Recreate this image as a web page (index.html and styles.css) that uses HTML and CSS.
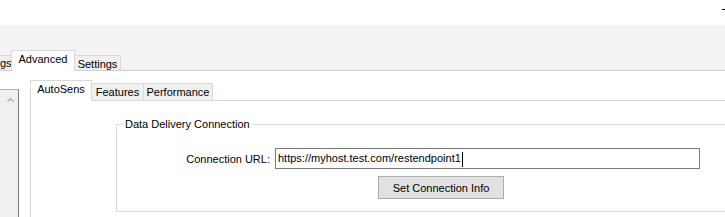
FILE: index.html
```html
<!DOCTYPE html>
<html lang="en">
<head>
    <meta charset="UTF-8">
    <title>Advanced - AutoSens</title>
    <link rel="stylesheet" href="styles.css">
</head>
<body>
    <div class="window">
        <div class="titlebar">
            <span class="min-btn"></span>
        </div>

        <div class="tabstrip">
            <div class="tab tab-cut">gs</div>
            <div class="tab active">Advanced</div>
            <div class="tab tab-settings">Settings</div>
        </div>

        <div class="main">
            <div class="sidebar">
                <svg class="chevron" width="7" height="5" viewBox="0 0 7 5">
                    <path d="M0.5 4.5 L3.5 1.5 L6.5 4.5" fill="none" stroke="#a6a6a6" stroke-width="1.2"/>
                </svg>
            </div>

            <div class="subtabs">
                <div class="subtab-strip">
                    <div class="subtab active">AutoSens</div>
                    <div class="subtab tab-features">Features</div>
                    <div class="subtab tab-perf">Performance</div>
                </div>

                <div class="page">
                    <fieldset class="group">
                        <legend>Data Delivery Connection</legend>
                        <div class="form">
                            <label class="form-label">Connection URL:</label>
                            <div class="textbox">
                                <span>https://myhost.test.com/restendpoint1</span><span class="caret"></span>
                            </div>
                            <button class="btn">Set Connection Info</button>
                        </div>
                    </fieldset>
                </div>
            </div>
        </div>
    </div>
</body>
</html>
```

FILE: styles.css
```css
* {
    box-sizing: border-box;
}

body {
    margin: 0;
    width: 725px;
    height: 217px;
    overflow: hidden;
    background: #ffffff;
    font-family: "Liberation Sans", Arial, sans-serif;
    font-size: 11px;
    color: #000000;
}

.window {
    display: flex;
    flex-direction: column;
    height: 217px;
}

/* title bar */
.titlebar {
    height: 25px;
    display: flex;
    justify-content: flex-end;
    align-items: flex-start;
}

.min-btn {
    width: 3px;
    height: 1px;
    margin-top: 9px;
    background: #000000;
}

/* outer tabs */
.tabstrip {
    height: 46px;
    background: #f3f3f3;
    border-bottom: 1px solid #d0d0d0;
    display: flex;
    align-items: flex-end;
}

.tab {
    height: 15px;
    margin-bottom: 0;
    background: #f0f0f0;
    border: 1px solid #d9d9d9;
    border-bottom: none;
    line-height: 14px;
    text-align: center;
    white-space: nowrap;
}

.tab-cut {
    width: 12px;
    border-left: none;
    text-align: right;
    padding-right: 2px;
}

.tab.active {
    position: relative;
    z-index: 1;
    width: 64px;
    height: 21px;
    margin-left: -1px;
    margin-bottom: -1px;
    padding-top: 1px;
    background: #ffffff;
}

.tab-settings {
    width: 47px;
    margin-left: -1px;
    padding-top: 1px;
}

/* body */
.main {
    flex: 1;
    display: flex;
    min-height: 0;
}

.sidebar {
    width: 19px;
    margin-top: 18px;
    background: #f0f0f0;
    border-top: 1px solid #b4b4b4;
    border-right: 1px solid #7a7a7a;
    padding: 7px 0 0 7px;
}

.chevron {
    display: block;
}

.subtabs {
    flex: 1;
    min-width: 0;
    margin-left: 11px;
    margin-top: 9px;
    display: flex;
    flex-direction: column;
}

.subtab-strip {
    height: 20px;
    display: flex;
    align-items: flex-end;
}

.subtab {
    height: 17px;
    padding-top: 1px;
    background: #f0f0f0;
    border: 1px solid #d9d9d9;
    border-bottom: none;
    line-height: 14px;
    text-align: center;
    white-space: nowrap;
}

.subtab.active {
    position: relative;
    z-index: 1;
    width: 62px;
    height: 21px;
    margin-bottom: -1px;
    background: #ffffff;
}

.tab-features {
    width: 53px;
    margin-left: -1px;
}

.tab-perf {
    width: 70px;
    margin-left: -1px;
}

.page {
    flex: 1;
    border-top: 1px solid #d9d9d9;
    border-left: 1px solid #d9d9d9;
    padding: 17px 0 0 85px;
}

/* group box */
.group {
    margin: 0;
    padding: 0;
    width: 640px;
    min-width: 0;
    border: 1px solid #dcdcdc;
}

.group legend {
    margin-left: 6px;
    padding: 0 2px;
    line-height: 13px;
}

.form {
    display: grid;
    grid-template-columns: 153px 425px;
    column-gap: 5px;
    row-gap: 7px;
    padding: 17px 0 12px 0;
}

.form-label {
    align-self: center;
    text-align: right;
    white-space: nowrap;
}

.textbox {
    height: 21px;
    border: 1px solid #7a7a7a;
    padding-left: 2px;
    line-height: 19px;
    white-space: nowrap;
}

.caret {
    display: inline-block;
    width: 1px;
    height: 15px;
    margin-left: 1px;
    background: #000000;
    vertical-align: middle;
}

.btn {
    grid-column: 2;
    justify-self: start;
    margin-left: 103px;
    width: 126px;
    height: 23px;
    padding: 0;
    background: #e1e1e1;
    border: 1px solid #adadad;
    font-family: inherit;
    font-size: 11px;
    color: #000000;
}
```
